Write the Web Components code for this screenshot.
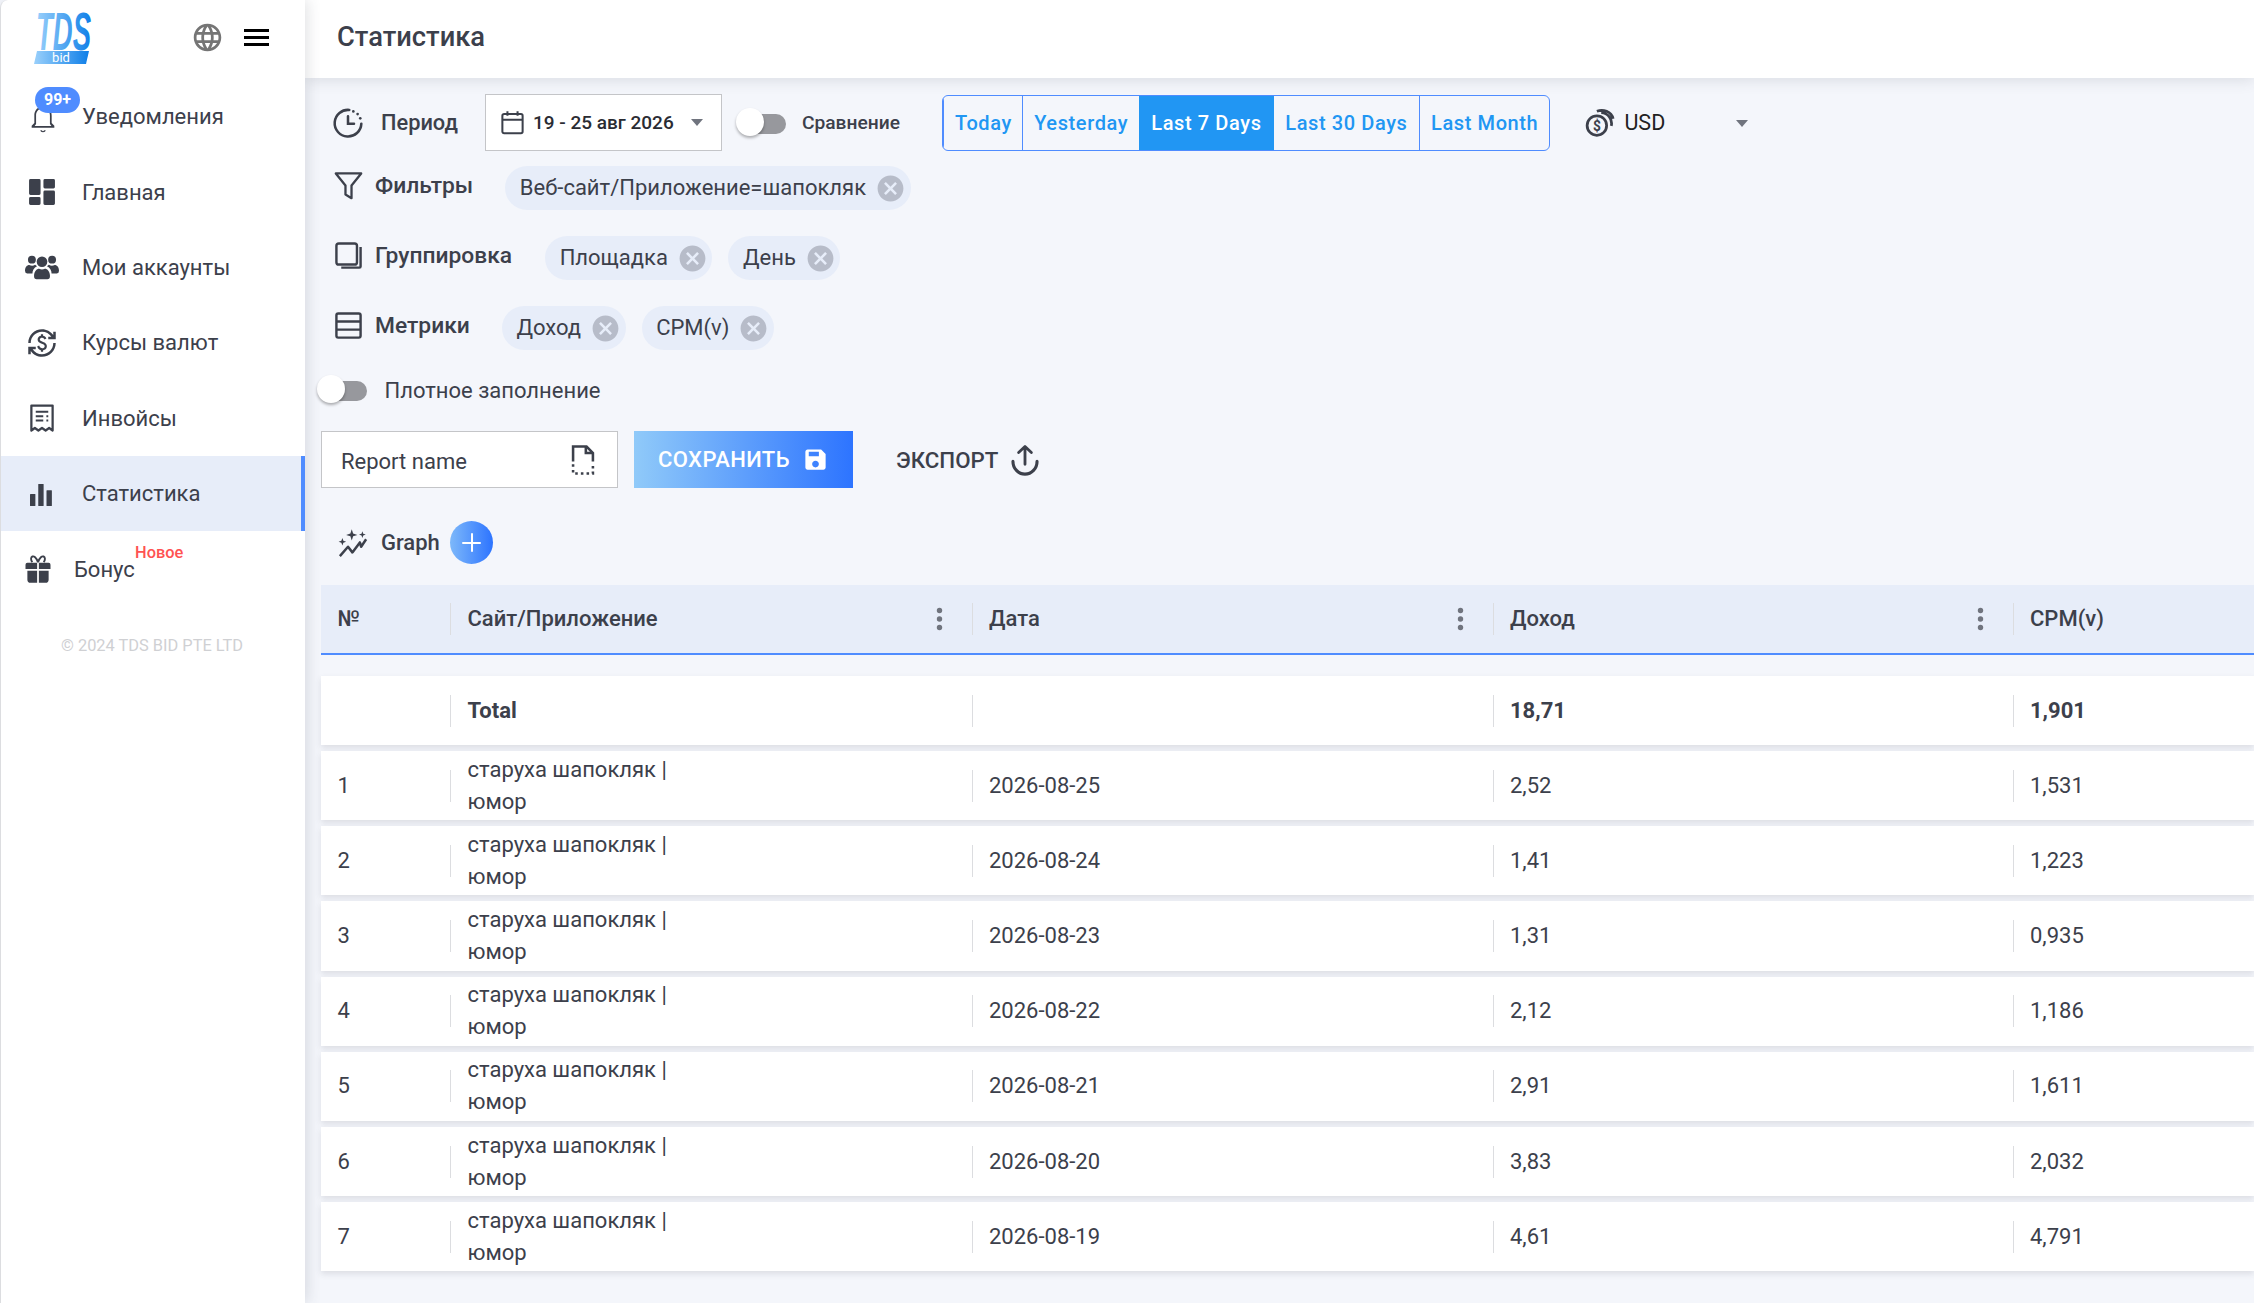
<!DOCTYPE html>
<html lang="ru">
<head>
<meta charset="utf-8">
<title>Статистика</title>
<style>
  html, body { margin: 0; height: 100%; overflow: hidden; }
  body { font-family: Roboto, "Liberation Sans", sans-serif; color: #3c404b; background: #f4f6fb; }
  stat-app { height: 1303px; }
</style>
</head>
<body>
<stat-app></stat-app>
<script>
const ICONS = {
  globe: '<path d="M11.99 2C6.47 2 2 6.48 2 12s4.47 10 9.99 10C17.52 22 22 17.52 22 12S17.52 2 11.99 2zm6.93 6h-2.95c-.32-1.25-.78-2.45-1.38-3.56 1.84.63 3.37 1.91 4.33 3.56zM12 4.04c.83 1.2 1.48 2.53 1.91 3.96h-3.82c.43-1.43 1.08-2.76 1.91-3.96zM4.26 14C4.1 13.36 4 12.69 4 12s.1-1.36.26-2h3.38c-.08.66-.14 1.32-.14 2 0 .68.06 1.34.14 2H4.26zm.82 2h2.95c.32 1.25.78 2.45 1.38 3.56-1.84-.63-3.37-1.9-4.33-3.56zm2.95-8H5.08c.96-1.66 2.49-2.93 4.33-3.56C8.81 5.55 8.35 6.75 8.03 8zM12 19.96c-.83-1.2-1.48-2.53-1.91-3.96h3.82c-.43 1.43-1.08 2.76-1.91 3.96zM14.34 14H9.66c-.09-.66-.16-1.32-.16-2 0-.68.07-1.35.16-2h4.68c.09.65.16 1.32.16 2 0 .68-.07 1.34-.16 2zm.25 5.56c.6-1.11 1.06-2.31 1.38-3.56h2.95c-.96 1.65-2.49 2.93-4.33 3.56zM16.36 14c.08-.66.14-1.32.14-2 0-.68-.06-1.34-.14-2h3.38c.16.64.26 1.31.26 2s-.1 1.36-.26 2h-3.38z"/>',
  bell: '<path d="M12 23.5c1.1 0 2-.6 2-1.5h-1c-.2.4-.6.6-1 .6s-.8-.2-1-.6h-1c0 .9.9 1.5 2 1.5zM18.5 16.5V11c0-3.2-1.7-5.9-4.8-6.6V4c0-.9-.8-1.7-1.7-1.7s-1.7.8-1.7 1.7v.4C7.2 5.1 5.5 7.8 5.5 11v5.5l-2 2V20h17v-1.5l-2-2zM5.7 18.7l1.1-1.5V11c0-3 1.9-5.5 5.2-5.5s5.2 2.5 5.2 5.5v6.2l1.1 1.5H5.7z"/>',
  dashboard: '<g transform="translate(-1.8 -1.8) scale(1.15)"><path d="M4 3h6a1 1 0 0 1 1 1v9a1 1 0 0 1-1 1H4a1 1 0 0 1-1-1V4a1 1 0 0 1 1-1zM4 15.5h6a1 1 0 0 1 1 1V20a1 1 0 0 1-1 1H4a1 1 0 0 1-1-1v-3.5a1 1 0 0 1 1-1zM14 3h6a1 1 0 0 1 1 1v4.5a1 1 0 0 1-1 1h-6a1 1 0 0 1-1-1V4a1 1 0 0 1 1-1zM14 11h6a1 1 0 0 1 1 1v8a1 1 0 0 1-1 1h-6a1 1 0 0 1-1-1v-8a1 1 0 0 1 1-1z"/></g>',
  groups: '<g transform="translate(0 3.8) scale(.75)"><circle cx="6.5" cy="4" r="3.7"/><circle cx="25.5" cy="4" r="3.7"/><circle cx="16" cy="6" r="5"/><path d="M0 14.5C0 11 2 9 4 9q3 1.6 5.5-.2 1 .5 1.8 1.4C8.5 11.600 7 14 7 17H2q-2 0-2-2.500zM32 14.500C32 11 30 9 28 9q-3 1.600-5.500-.2-1 .5-1.800 1.400c2.800 1.400 4.300 3.800 4.300 6.800h5q2 0 2-2.500zM8.500 19.500c0-4.500 2.500-7 4.800-7q2.700 1.500 5.400 0c2.300 0 4.800 2.500 4.800 7q0 3-2.500 3H11q-2.500 0-2.500-3z"/></g>',
  exchange: '<path d="M12.89 11.1c-1.78-.59-2.64-.96-2.64-1.9 0-1.02 1.11-1.39 1.81-1.39 1.31 0 1.79.99 1.9 1.34l1.58-.67c-.15-.44-.82-1.91-2.66-2.23V5h-1.75v1.26c-2.6.56-2.62 2.85-2.62 2.96 0 2.27 2.25 2.91 3.35 3.31 1.58.56 2.28 1.07 2.28 2.03 0 1.13-1.05 1.61-1.98 1.61-1.82 0-2.34-1.87-2.4-2.09l-1.66.67c.63 2.19 2.28 2.78 3.02 2.96V19h1.75v-1.24c.52-.09 3.02-.59 3.02-3.22.01-1.39-.6-2.61-3-3.44zM3 21H1v-6h6v2H4.52c1.61 2.41 4.36 4 7.48 4 4.97 0 9-4.03 9-9h2c0 6.08-4.92 11-11 11-3.72 0-7.01-1.85-9-4.67V21zm-2-9C1 5.92 5.92 1 12 1c3.72 0 7.01 1.85 9 4.67V3h2v6h-6V7h2.48C17.87 4.59 15.12 3 12 3c-4.97 0-9 4.03-9 9H1z"/>',
  receipt: '<path fill="none" stroke="currentColor" stroke-width="1.8" stroke-linejoin="round" d="M3.5 2h17v20l-2.8-2-2.800 2-2.900-2-2.900 2-2.800-2-2.800 2z"/><path fill="none" stroke="currentColor" stroke-width="1.6" d="M7 7h10M7 10.500h6M15.500 10.500H17M7 14h6M15.500 14H17"/>',
  chart: '<rect x="2.4" y="12" width="4.3" height="9.6" rx=".4"/><rect x="9" y="4" width="4.3" height="17.6" rx=".4"/><rect x="15.6" y="9" width="4.3" height="12.6" rx=".4"/>',
  gift: '<path d="M2 8.5A1.5 1.5 0 0 1 3.5 7h7.8v5H2zM12.7 7h7.8A1.5 1.5 0 0 1 22 8.5V12h-9.3zM3.5 13.4h7.8V23H6a2.5 2.5 0 0 1-2.5-2.5zM12.7 13.400h7.800v7.100A2.500 2.500 0 0 1 18 23h-5.300z"/><path fill="none" stroke="currentColor" stroke-width="1.5" d="M12 6.500C10.500 2.500 8.800 1.500 7.500 2S6 4.800 7.500 6.500M12 6.500c1.500-4 3.200-5 4.500-4.500s1.500 2.800 0 4.500"/>',
  clock: '<path fill="none" stroke="currentColor" stroke-width="1.9" stroke-linecap="round" d="M13 2.200A10 10 0 1 0 22 12.500"/><path fill="none" stroke="currentColor" stroke-width="1.9" stroke-linecap="round" d="M12 7v5.500h4.500"/><g><circle cx="16" cy="3.3" r="1"/><circle cx="19.2" cy="5.3" r="1"/><circle cx="21.2" cy="8.5" r="1"/></g>',
  funnel: '<path fill="none" stroke="currentColor" stroke-width="1.9" stroke-linejoin="round" d="M1.500 2h21l-8 10v10.500l-5-3V12z"/>',
  copies: '<rect x="2" y="2" width="17" height="17.5" rx="2" fill="none" stroke="currentColor" stroke-width="2"/><path fill="none" stroke="currentColor" stroke-width="2" d="M22 5v16a1 1 0 0 1-1 1H6"/>',
  table: '<rect x="2" y="2" width="20" height="20" rx="1.5" fill="none" stroke="currentColor" stroke-width="2"/><path fill="none" stroke="currentColor" stroke-width="2" d="M2 8.700h20M2 15.400h20"/>',
  calendar: '<rect x="3" y="4.5" width="18" height="17" rx="1.5" fill="none" stroke="currentColor" stroke-width="1.8"/><path fill="none" stroke="currentColor" stroke-width="1.8" d="M3 9.500h18M7.500 2v4M16.500 2v4"/>',
  coins: '<circle cx="9.5" cy="14" r="7.8" fill="none" stroke="currentColor" stroke-width="2.2"/><path fill="none" stroke="currentColor" stroke-width="2.2" d="M13 3.800a8.500 8.500 0 0 1 8 10.500M9.500 2.600c5-1.800 11.500 0 13 6"/><text x="9.5" y="18" font-size="11" font-weight="700" text-anchor="middle" font-family="Roboto, sans-serif">$</text>',
  file: '<path fill="none" stroke="currentColor" stroke-width="1.8" d="M5 13V2.500h9.500L19 7v6M14 2.500V7h5"/><path fill="none" stroke="currentColor" stroke-width="1.8" stroke-dasharray="1.8 2.2" d="M5 15v6.500h14V15"/>',
  save: '<path d="M17 3H5c-1.110 0-2 .9-2 2v14c0 1.100.890 2 2 2h14c1.100 0 2-.9 2-2V7l-4-4zm-5 16c-1.660 0-3-1.340-3-3s1.340-3 3-3 3 1.340 3 3-1.340 3-3 3zm3-10H6V5h9v4z"/>',
  upload: '<path fill="none" stroke="currentColor" stroke-width="2" stroke-linecap="round" stroke-linejoin="round" d="M12 15V2.500M7.500 6.700 12 2.500l4.500 4.200"/><path fill="none" stroke="currentColor" stroke-width="2.2" stroke-linecap="round" d="M3.500 13a8.500 9 0 0 0 17 0"/>',
  graph: '<path fill="none" stroke="currentColor" stroke-width="2" stroke-linejoin="round" d="M1.500 22.500 8 15l3.500 4.500 6-8 1 3.500 4-6"/><path d="M11 1l1.100 3.400L15.500 5.500l-3.400 1.100L11 10 9.900 6.600 6.500 5.500l3.400-1.100zM3.500 8l.8 2.200 2.200.8-2.200.8-.8 2.200-.8-2.200-2.200-.8 2.200-.8zM19.500 2.500l.7 2 2 .7-2 .7-.7 2-.7-2-2-.7 2-.7z"/>',
  close: '<path d="M12 2C6.470 2 2 6.470 2 12s4.470 10 10 10 10-4.470 10-10S17.530 2 12 2zm5 13.590L15.590 17 12 13.410 8.410 17 7 15.590 10.590 12 7 8.410 8.410 7 12 10.590 15.590 7 17 8.410 13.410 12 17 15.590z"/>'
};

function icon(name, size, extra) {
  return `<svg viewBox="0 0 24 24" width="${size}" height="${size}" fill="currentColor" ${extra || ""}>${ICONS[name]}</svg>`;
}

class NavItem extends HTMLElement {
  constructor() {
    super();
    this.attachShadow({ mode: "open" });
  }
  connectedCallback() {
    const size = this.getAttribute("size") || 30;
    this.shadowRoot.innerHTML = `
      <style>
        :host { display: flex; align-items: center; height: 75.4px; box-sizing: border-box; padding-left: 26px; font-size: 22px; color: #3c404b; position: relative; }
        :host([active]) { background: #e7edf9; border-right: 4px solid #4f8cff; }
        .icon { width: 55px; display: flex; flex: none; color: #3c404b; }
        :host([name="bonus"]) { padding-left: 22px; }
        :host([name="bonus"]) .icon { width: 51px; }
        :host([name="accounts"]) { padding-left: 24px; }
        :host([name="accounts"]) .icon { width: 57px; }
      </style>
      <span class="icon">${icon(this.getAttribute("icon"), size)}</span>
      <span><slot></slot></span>
      <slot name="over"></slot>
    `;
  }
}
customElements.define("nav-item", NavItem);

class SideBar extends HTMLElement {
  constructor() {
    super();
    this.attachShadow({ mode: "open" });
    this.shadowRoot.innerHTML = `
      <style>
        :host { display: block; width: 305px; flex: none; box-sizing: border-box; background: #fff; border-left: 1px solid #dcdde0; border-top-left-radius: 8px; box-shadow: 3px 0 14px rgba(60,64,75,.14); position: relative; z-index: 2; }
        .top { height: 78px; box-sizing: border-box; padding: 0 0 4px 33px; display: flex; align-items: center; }
        .logo { flex: none; align-self: flex-start; }
        .globe { margin-left: 96.5px; color: #757575; display: flex; }
        .burger { margin-left: 20.5px; width: 25px; display: flex; flex-direction: column; gap: 4px; }
        .burger i { display: block; height: 3px; background: #000; }
        .badge { position: absolute; left: 34px; top: 8px; background: #4f8cff; color: #fff; font-size: 16px; font-weight: 700; line-height: 26px; width: 45px; text-align: center; border-radius: 13px; }
        .nnew { position: absolute; left: 134px; top: -26px; color: #ff5252; font-size: 16.4px; font-weight: 500; white-space: nowrap; }
        .nnew-wrap { position: absolute; left: 0; top: 50%; }
        .copy { color: #cfd0d3; font-size: 16.4px; text-align: center; margin-top: 29px; padding-right: 2px; }
        nav { display: block; margin-top: 1px; }
      </style>
      <div class="top">
        <svg class="logo" width="62" height="67" viewBox="0 -11 62 67">
          <defs>
            <linearGradient id="lg" x1="0" x2="1" y1="0" y2="0"><stop offset="0" stop-color="#9ad0fb"/><stop offset="1" stop-color="#0f7fe8"/></linearGradient>
          </defs>
          <text x="2" y="39" font-family="Liberation Sans, sans-serif" font-size="54" font-weight="700" font-style="italic" fill="url(#lg)" textLength="55" lengthAdjust="spacingAndGlyphs">TDS</text>
          <polygon points="3,40 55,40 52,53 0,53" fill="url(#lg)"/>
          <text x="27" y="51" font-family="Roboto, sans-serif" font-size="13" fill="#fff" text-anchor="middle">bid</text>
        </svg>
        <span class="globe" style="margin-left:94.5px">${icon("globe", 33)}</span>
        <span class="burger"><i></i><i></i><i></i></span>
      </div>
      <nav>
        <nav-item icon="bell" size="32">Уведомления<span slot="over" class="badge">99+</span></nav-item>
        <nav-item icon="dashboard">Главная</nav-item>
        <nav-item icon="groups" name="accounts" size="34">Мои аккаунты</nav-item>
        <nav-item icon="exchange">Курсы валют</nav-item>
        <nav-item icon="receipt">Инвойсы</nav-item>
        <nav-item icon="chart" active>Статистика</nav-item>
        <nav-item icon="gift" name="bonus">Бонус<span slot="over" class="nnew-wrap"><span class="nnew">Новое</span></span></nav-item>
      </nav>
      <div class="copy">© 2024 TDS BID PTE LTD</div>
    `;
  }
}
customElements.define("side-bar", SideBar);

class TopBar extends HTMLElement {
  constructor() {
    super();
    this.attachShadow({ mode: "open" });
    this.shadowRoot.innerHTML = `
      <style>
        :host { display: flex; align-items: center; height: 78px; flex: none; box-sizing: border-box; padding-left: 32px; padding-bottom: 4px; background: #fff; font-size: 27.3px; font-weight: 500; color: #3c404b; box-shadow: 0 2px 14px rgba(60,64,75,.14); position: relative; z-index: 1; }
      </style>
      <slot></slot>
    `;
  }
}
customElements.define("top-bar", TopBar);

class FilterChip extends HTMLElement {
  constructor() {
    super();
    this.attachShadow({ mode: "open" });
    this.shadowRoot.innerHTML = `
      <style>
        :host { display: inline-flex; align-items: center; height: 44px; box-sizing: border-box; padding: 0 4.5px 0 14.6px; gap: 9px; border-radius: 22px; background: #e7edf9; font-size: 22px; color: #3c404b; white-space: nowrap; }
        span { padding-bottom: 2px; }
        svg { color: #b7bcc9; display: block; }
      </style>
      <span><slot></slot></span>${icon("close", 31)}
    `;
  }
}
customElements.define("filter-chip", FilterChip);

class ToggleSwitch extends HTMLElement {
  constructor() {
    super();
    this.attachShadow({ mode: "open" });
    this.shadowRoot.innerHTML = `
      <style>
        :host { display: block; position: relative; width: 50px; height: 30px; flex: none; }
        .track { position: absolute; left: 4px; right: 0; top: 6px; height: 20px; border-radius: 10px; background: #97989d; }
        .knob { position: absolute; left: 0; top: 0; width: 28px; height: 28px; border-radius: 50%; background: #fff; box-shadow: 0 2px 3px rgba(0,0,0,.3); }
      </style>
      <div class="track"></div><div class="knob"></div>
    `;
  }
}
customElements.define("toggle-switch", ToggleSwitch);

class RangeButtons extends HTMLElement {
  constructor() {
    super();
    this.attachShadow({ mode: "open" });
    const items = [["Today", 79], ["Yesterday", 116.5], ["Last 7 Days", 135], ["Last 30 Days", 145], ["Last Month", 130.5]];
    this.shadowRoot.innerHTML = `
      <style>
        :host { display: flex; height: 56px; box-sizing: border-box; border: 1px solid #4f8cff; border-radius: 6px; overflow: hidden; flex: none; }
        div { display: flex; align-items: center; justify-content: center; font-size: 20px; font-weight: 500; color: #2196f3; letter-spacing: .6px; border-left: 1px solid #4f8cff; white-space: nowrap; box-sizing: border-box; }
        div:first-child { border-left: 0; }
        div.on { background: #2196f3; color: #fff; border-left: 0; }
        div.on + div { border-left: 0; }
      </style>
      ${items.map(([t, w]) => `<div class="${t === "Last 7 Days" ? "on" : ""}" style="width:${w}px">${t}</div>`).join("")}
    `;
  }
}
customElements.define("range-buttons", RangeButtons);

class LabelIcon extends HTMLElement {
  constructor() {
    super();
    this.attachShadow({ mode: "open" });
  }
  connectedCallback() {
    const flat = this.hasAttribute("flat");
    this.shadowRoot.innerHTML = `
      <style>
        :host { display: flex; align-items: center; gap: 12px; margin-left: -1px; font-size: 22.8px; font-weight: 500; color: #3c404b; flex: none; white-space: nowrap; position: relative; top: -3px; }
        :host([flat]) { top: 0; gap: 17px; margin-left: -3px; font-size: 21.8px; }
        svg { display: block; flex: none; }
      </style>
      ${icon(this.getAttribute("icon"), flat ? 32 : 29)}<slot></slot>
    `;
  }
}
customElements.define("label-icon", LabelIcon);

class StatRow extends HTMLElement {
  constructor() {
    super();
    this.attachShadow({ mode: "open" });
  }
  connectedCallback() {
    const head = this.hasAttribute("head");
    const cells = JSON.parse(this.getAttribute("cells"));
    const dots = `<svg class="dots" width="7" height="24" viewBox="0 0 7 24" fill="#70747e"><circle cx="3.5" cy="3.5" r="2.7"/><circle cx="3.5" cy="12" r="2.7"/><circle cx="3.5" cy="20.5" r="2.7"/></svg>`;
    this.shadowRoot.innerHTML = `
      <style>
        :host { display: grid; grid-template-columns: 129px 521.5px 521px 520px 1fr; align-items: center; height: 69.17px; margin-bottom: 6px; background: #fff; font-size: 22px; line-height: 32px; color: #3c404b; box-shadow: 0 3px 6px rgba(60,64,75,.13); }
        :host([head]) { height: 70px; background: #e7edf9; border-bottom: 2px solid #4f8cff; box-sizing: border-box; margin-bottom: 21px; font-weight: 500; box-shadow: none; }
        :host([total]) { font-weight: 700; }
        .cell { display: flex; align-items: center; height: 32px; position: relative; }
        .cell + .cell { border-left: 1px solid #dcdde0; }
        .cell:nth-child(2) { border-left-color: #a9abb0; }
        .txt { padding-left: 16.5px; white-space: nowrap; }
        .site { width: 230px; white-space: normal; }
        .dots { position: absolute; right: 29px; top: 4px; }
      </style>
      ${cells.map((c, i) => `<div class="cell"><span class="txt ${i === 1 && !head ? "site" : ""}">${c}</span>${head && i > 0 && i < 4 ? dots : ""}</div>`).join("")}
    `;
  }
}
customElements.define("stat-row", StatRow);

class StatTable extends HTMLElement {
  constructor() {
    super();
    this.attachShadow({ mode: "open" });
    const rows = [
      ["2026-08-25", "2,52", "1,531"],
      ["2026-08-24", "1,41", "1,223"],
      ["2026-08-23", "1,31", "0,935"],
      ["2026-08-22", "2,12", "1,186"],
      ["2026-08-21", "2,91", "1,611"],
      ["2026-08-20", "3,83", "2,032"],
      ["2026-08-19", "4,61", "4,791"]
    ];
    const attr = (a) => JSON.stringify(a).replace(/"/g, "&quot;");
    this.shadowRoot.innerHTML = `
      <style>:host { display: block; margin-top: 21px; }</style>
      <stat-row head cells="${attr(["№", "Сайт/Приложение", "Дата", "Доход", "CPM(v)"])}"></stat-row>
      <stat-row total cells="${attr(["", "Total", "", "18,71", "1,901"])}"></stat-row>
      ${rows.map((r, i) => `<stat-row cells="${attr([String(i + 1), "старуха шапокляк | юмор", ...r])}"></stat-row>`).join("")}
    `;
  }
}
customElements.define("stat-table", StatTable);

class StatApp extends HTMLElement {
  constructor() {
    super();
    this.attachShadow({ mode: "open" });
    this.shadowRoot.innerHTML = `
      <style>
        :host { display: flex; width: 100%; overflow: hidden; font-size: 22px; }
        .main { flex: 1; min-width: 0; display: flex; flex-direction: column; overflow: hidden; }
        .content { padding: 16px 0 0 16px; }
        .row { display: flex; align-items: center; }
        .indent { padding-left: 14px; }
        .period { height: 57px; }
        .date { display: flex; align-items: center; width: 237px; height: 57px; box-sizing: border-box; margin-left: 27px; padding-left: 13px; background: #fff; border: 1px solid #c4c5c8; font-size: 19px; font-weight: 500; color: #2a2c33; white-space: nowrap; flex: none; }
        .date svg { margin-right: 7px; color: #3c404b; }
        .caret { width: 0; height: 0; border: 6.5px solid transparent; border-top: 7px solid #70747e; border-bottom: 0; margin-left: 17px; }
        .compare { margin: 0 0 0 14px; }
        .cmp-label { font-size: 19.2px; font-weight: 500; margin-left: 16px; margin-right: 42.5px; white-space: nowrap; flex: none; }
        .usd { display: flex; align-items: center; margin-left: 35px; color: #222; font-size: 21.5px; flex: none; }
        .usd svg { color: #3c404b; margin-right: 9px; }
        .usd .caret { margin-left: 71px; margin-top: 2px; }
        .chips { height: 44px; margin-top: 15px; gap: 32px; }
        .chips.g2 { margin-top: 26px; }
        .chips.g3 { margin-top: 26px; }
        .chips.g2 { gap: 33px; }
        .set { display: flex; gap: 16px; }
        .dense { height: 40px; margin-top: 20px; padding-left: 0; font-size: 22px; }
        .dense span { margin-left: 17.5px; }
        .dense toggle-switch { margin-left: -4px; }
        .report { height: 57px; margin-top: 21px; }
        .name { display: flex; align-items: center; justify-content: space-between; width: 297px; height: 57px; box-sizing: border-box; padding: 3px 17px 0 19px; background: #fff; border: 1px solid #c4c5c8; font-size: 22px; color: #3c404b; flex: none; }
        .name svg { margin-top: -3px; }
        .save { display: flex; align-items: center; justify-content: center; gap: 12px; width: 219px; height: 57px; margin-left: 16px; background: linear-gradient(90deg, #90caf9, #2d74ff); color: #fff; font-size: 22px; font-weight: 500; letter-spacing: .4px; flex: none; }
        .export { display: flex; align-items: center; gap: 10px; margin-left: 43px; font-size: 22.3px; font-weight: 500; color: #3c404b; }
        .graph { height: 43px; margin-top: 33px; padding-left: 17px; font-size: 22px; font-weight: 500; }
        .graph span { margin: 0 10.5px 0 13px; }
        .plus { width: 43px; height: 43px; border-radius: 50%; background: linear-gradient(90deg, #7db8fa, #2d74ff); position: relative; flex: none; }
        .plus::before, .plus::after { content: ""; position: absolute; background: #fff; border-radius: 1px; }
        .plus::before { left: 12px; right: 12px; top: 20.5px; height: 2px; }
        .plus::after { top: 12px; bottom: 12px; left: 20.5px; width: 2px; }
      </style>
      <side-bar></side-bar>
      <div class="main">
        <top-bar>Статистика</top-bar>
        <div class="content">
          <div class="row period indent">
            <label-icon icon="clock" flat>Период</label-icon>
            <div class="date">${icon("calendar", 27)}19 - 25 авг 2026<i class="caret"></i></div>
            <toggle-switch class="compare"></toggle-switch>
            <span class="cmp-label">Сравнение</span>
            <range-buttons></range-buttons>
            <div class="usd">${icon("coins", 30)}USD<i class="caret"></i></div>
          </div>
          <div class="row chips indent">
            <label-icon icon="funnel">Фильтры</label-icon>
            <div class="set"><filter-chip>Веб-сайт/Приложение=шапокляк</filter-chip></div>
          </div>
          <div class="row chips g2 indent">
            <label-icon icon="copies">Группировка</label-icon>
            <div class="set"><filter-chip>Площадка</filter-chip><filter-chip>День</filter-chip></div>
          </div>
          <div class="row chips g3 indent">
            <label-icon icon="table">Метрики</label-icon>
            <div class="set"><filter-chip>Доход</filter-chip><filter-chip>CPM(v)</filter-chip></div>
          </div>
          <div class="row dense">
            <toggle-switch></toggle-switch><span>Плотное заполнение</span>
          </div>
          <div class="row report">
            <div class="name">Report name${icon("file", 34)}</div>
            <div class="save">СОХРАНИТЬ${icon("save", 27)}</div>
            <div class="export">ЭКСПОРТ${icon("upload", 34)}</div>
          </div>
          <div class="row graph">
            ${icon("graph", 30)}<span>Graph</span><div class="plus"></div>
          </div>
          <stat-table></stat-table>
        </div>
      </div>
    `;
  }
}
customElements.define("stat-app", StatApp);
</script>
</body>
</html>
